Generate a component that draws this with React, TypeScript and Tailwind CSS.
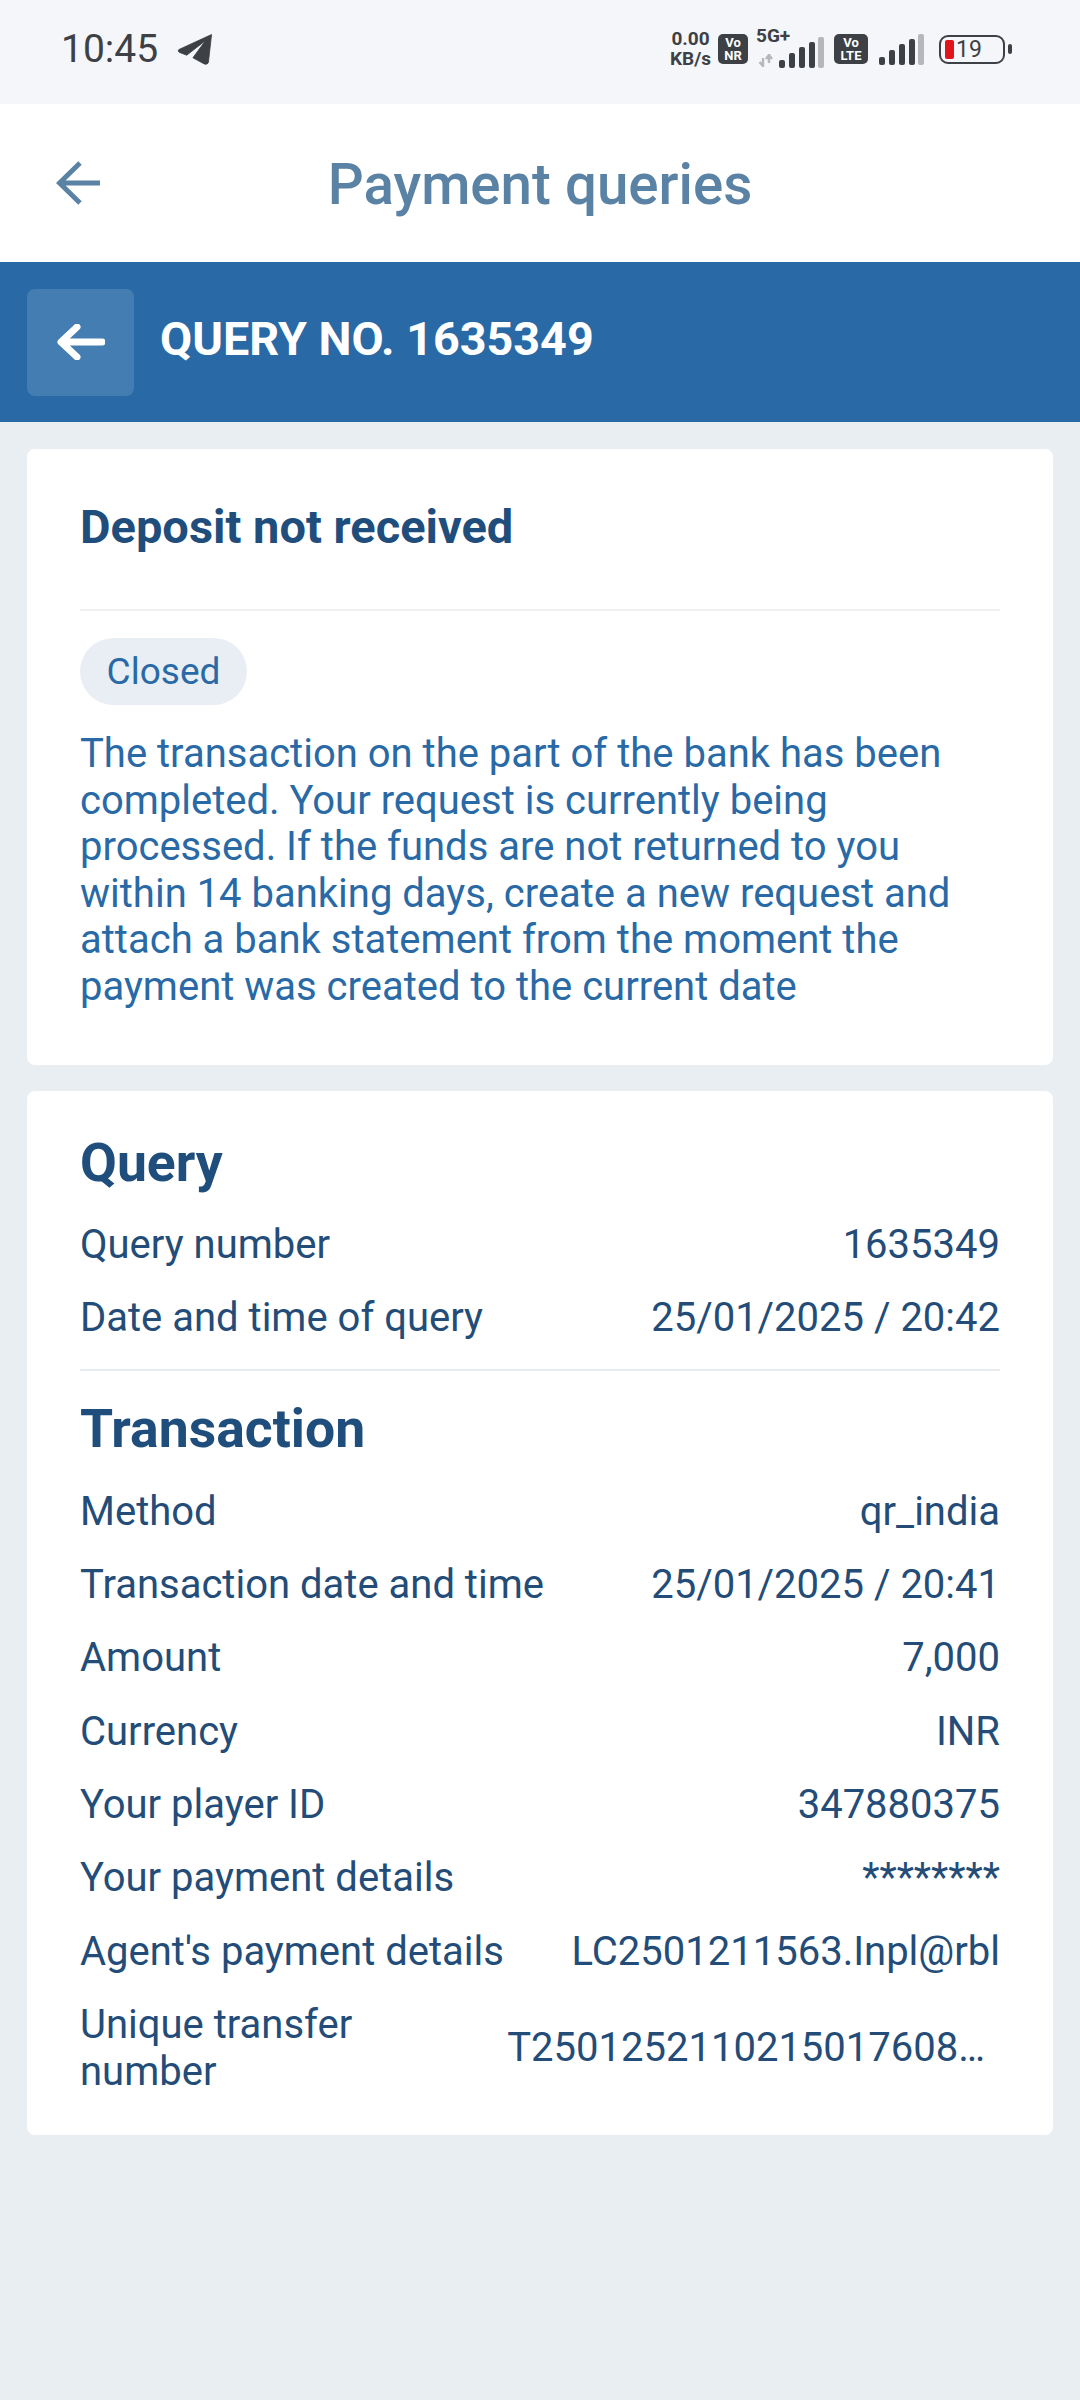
const Bars = ({ dark }: { dark: number }) => (
  <svg width="46" height="31" viewBox="0 0 46 31">
    <rect x="1" y="23" width="6" height="8" rx="2" fill={dark > 0 ? "#3d4045" : "#b5b7ba"} />
    <rect x="11" y="16" width="6" height="15" rx="2" fill="#3d4045" />
    <rect x="21" y="10" width="6" height="21" rx="2" fill="#3d4045" />
    <rect x="31" y="5" width="6" height="26" rx="2" fill="#3d4045" />
    <rect x="40" y="0" width="6" height="31" rx="2" fill="#b5b7ba" />
  </svg>
);

const Row = ({ label, value }: { label: string; value: string }) => (
  <div className="flex h-[73.3px] items-center justify-between gap-6 text-[40px] leading-[47px] text-[#234d78]">
    <span>{label}</span>
    <span className="whitespace-nowrap">{value}</span>
  </div>
);

const App = () => {
  return (
    <div className="flex h-[2400px] w-[1080px] flex-col bg-[#e9eef2] font-['Roboto',sans-serif]">
      {/* status bar */}
      <div className="flex h-[104px] items-center justify-between bg-[#f4f6fa] pb-[6px] pl-[61px] pr-[68px]">
        <div className="flex items-center gap-[19px]">
          <span className="text-[39px] leading-none text-[#3d4045]">10:45</span>
          <svg width="36" height="31" viewBox="0 0 34 30">
            <path
              d="M33 0.5 L1.5 15 Q-0.5 16.5 2 17.8 L9 20.5 L27 6.5 L15 23 L26 29 Q29 30 30 27.5 Z"
              fill="#3d4045"
              stroke="#3d4045"
              strokeWidth="0.8"
              strokeLinejoin="round"
            />
          </svg>
        </div>
        <div className="flex items-center">
          <div className="flex flex-col items-center text-[19px] font-bold leading-[20px] text-[#3d4045]">
            <span>0.00</span>
            <span>KB/s</span>
          </div>
          <div className="ml-[7px] flex h-[30px] w-[30px] flex-col items-center justify-center rounded-[5px] bg-[#3d4045] text-[13px] font-bold leading-[13px] text-white">
            <span>Vo</span>
            <span>NR</span>
          </div>
          <div className="relative ml-[8px] h-[38px] w-[68px]">
            <span className="absolute left-0 top-[-4px] text-[19px] font-bold leading-[20px] text-[#3d4045]">5G+</span>
            <div className="absolute bottom-0 right-0">
              <Bars dark={1} />
            </div>
            <svg className="absolute bottom-[1px] left-[2px]" width="18" height="13" viewBox="0 0 18 13">
              <path d="M5 13V4M1.5 8 5 12M11 0v9M8 5l3-4 3 4" stroke="#b5b7ba" strokeWidth="2.4" fill="none" />
            </svg>
          </div>
          <div className="ml-[10px] flex h-[30px] w-[34px] flex-col items-center justify-center rounded-[5px] bg-[#3d4045] text-[13px] font-bold leading-[13px] text-white">
            <span>Vo</span>
            <span>LTE</span>
          </div>
          <div className="ml-[10px]">
            <Bars dark={1} />
          </div>
          <div className="ml-[15px] flex items-center gap-[3px]">
            <div className="flex h-[29px] w-[66px] items-center rounded-[9px] border-[2px] border-[#3d4045] pl-[4px]">
              <div className="h-[19px] w-[9px] rounded-[2px] bg-[#e3131b]" />
              <span className="ml-[2px] text-[23px] leading-none text-[#3d4045]">19</span>
            </div>
            <div className="h-[10px] w-[4px] rounded-[2px] bg-[#3d4045]" />
          </div>
        </div>
      </div>

      {/* page title */}
      <div className="relative flex h-[158px] items-center justify-center bg-white pt-[5px]">
        <svg className="absolute left-[56px] top-[56px]" width="46" height="46" viewBox="0 0 46 46">
          <path d="M44 23H4M24 3 3.5 23 24 43" fill="none" stroke="#5a82a4" strokeWidth="5" />
        </svg>
        <span className="text-[56.5px] font-medium leading-none text-[#5a82a4]">Payment queries</span>
      </div>

      {/* query bar */}
      <div className="flex h-[160px] items-center gap-[26px] bg-[#296aa6] pl-[27px]">
        <div className="flex h-[107px] w-[107px] items-center justify-center rounded-[8px] bg-[#437db1]">
          <svg width="48" height="36" viewBox="0 0 48 36">
            <path d="M45 18H5M20 3 4 18 20 33" fill="none" stroke="#fff" strokeWidth="7" strokeLinecap="round" strokeLinejoin="round" />
          </svg>
        </div>
        <span className="pb-[5px] text-[46.7px] font-bold leading-none text-white">QUERY NO. 1635349</span>
      </div>

      <div className="flex flex-col gap-[26px] px-[27px] pt-[27px]">
        {/* status card */}
        <div className="h-[616px] rounded-[8px] bg-white px-[53px]">
          <div className="flex h-[162px] items-start border-b-[2px] border-[#eef0f2] pt-[50px]">
            <span className="text-[47px] font-bold leading-[55px] text-[#1f4e7d]">Deposit not received</span>
          </div>
          <div className="mt-[27px] flex h-[67px] w-[167px] items-center justify-center rounded-full bg-[#e9eef4] text-[37px] text-[#296aa6]">
            Closed
          </div>
          <p className="mt-[26px] text-[40px] leading-[46.5px] text-[#296aa6]">
            The transaction on the part of the bank has been completed. Your request is currently being processed. If the funds are not returned to you within 14 banking days, create a new request and attach a bank statement from the moment the payment was created to the current date
          </p>
        </div>

        {/* details card */}
        <div className="h-[1044px] rounded-[8px] bg-white px-[53px] pt-[41px]">
          <h2 className="text-[53.5px] font-bold leading-[62px] text-[#1f4e7d]">Query</h2>
          <div className="mt-[14px] border-b-[2px] border-[#e9ecee] pb-[14px]">
            <Row label="Query number" value="1635349" />
            <Row label="Date and time of query" value="25/01/2025 / 20:42" />
          </div>
          <h2 className="mt-[27px] text-[53.5px] font-bold leading-[62px] text-[#1f4e7d]">Transaction</h2>
          <div className="mt-[15px]">
            <Row label="Method" value="qr_india" />
            <Row label="Transaction date and time" value="25/01/2025 / 20:41" />
            <Row label="Amount" value="7,000" />
            <Row label="Currency" value="INR" />
            <Row label="Your player ID" value="347880375" />
            <Row label="Your payment details" value="********" />
            <Row label="Agent's payment details" value="LC2501211563.Inpl@rbl" />
          </div>
          <div className="mt-[13px] flex items-center justify-between text-[40px] leading-[47px] text-[#234d78]">
            <span className="w-[340px]">Unique transfer number</span>
            <span className="pr-[15px]">T2501252110215017608…</span>
          </div>
        </div>
      </div>
    </div>
  );
};

export default App;
